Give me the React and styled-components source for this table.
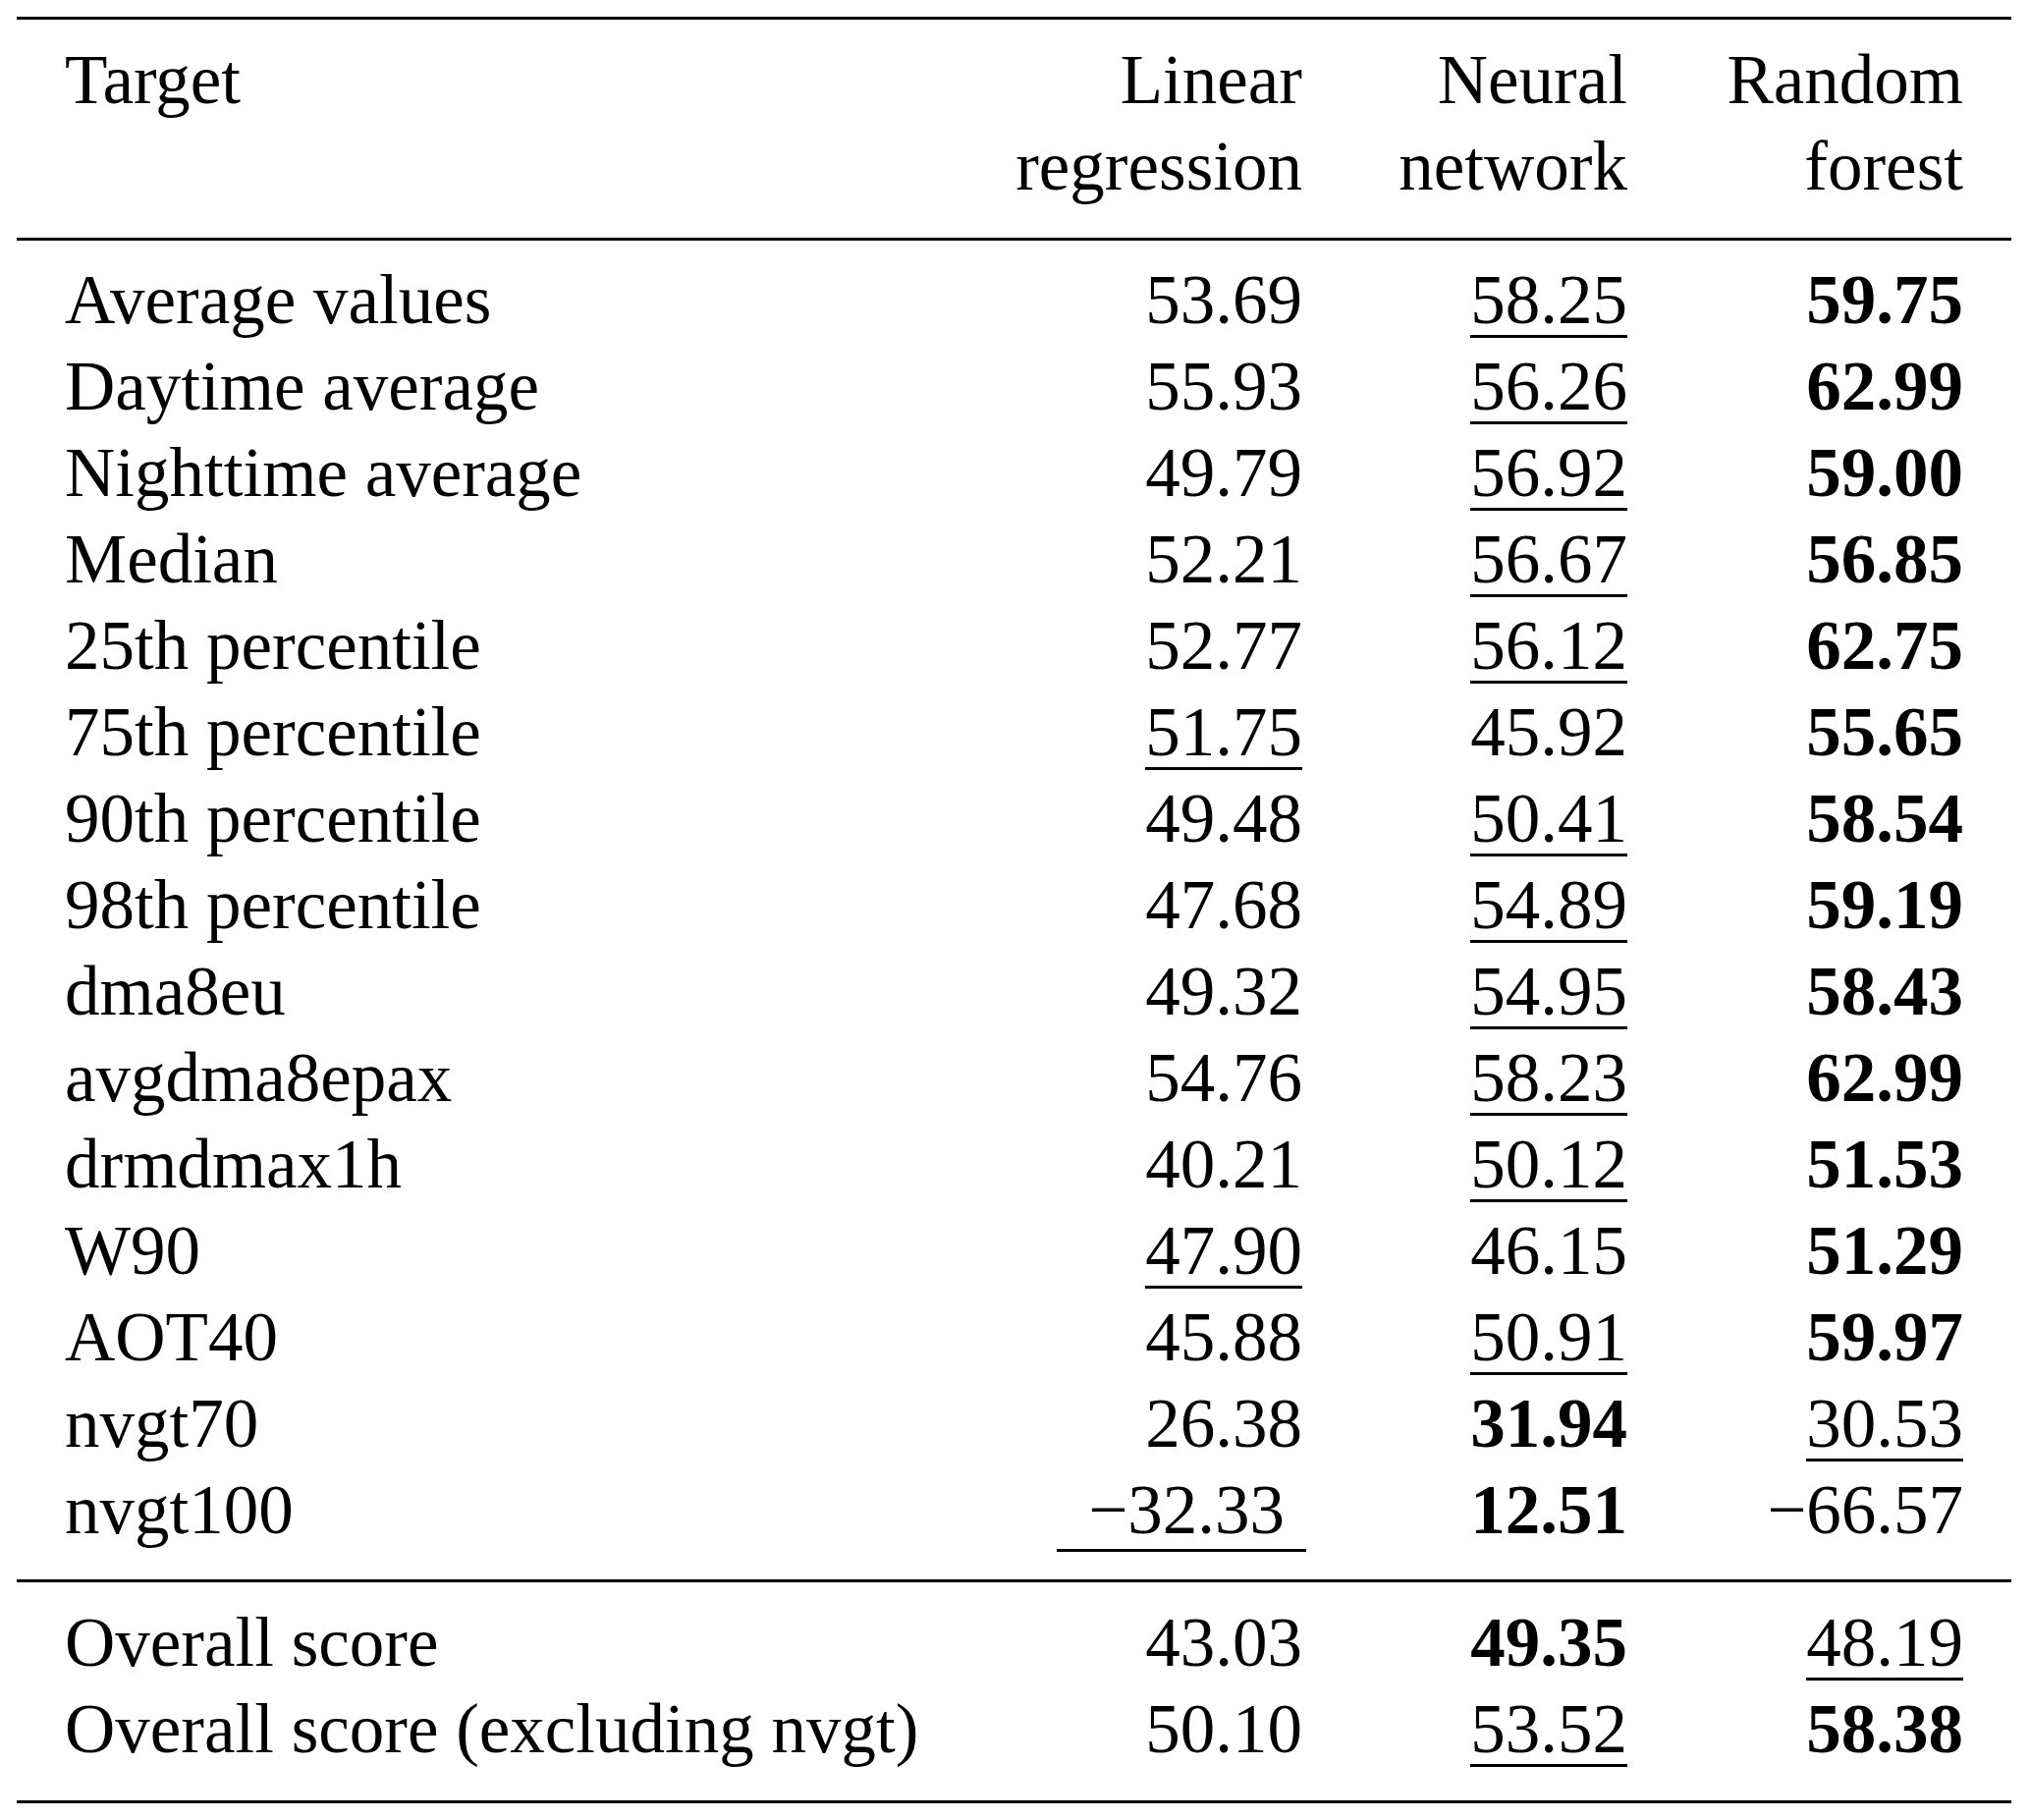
import styled, { createGlobalStyle } from "styled-components";

const GlobalStyle = createGlobalStyle`
  body {
    margin: 0;
    background: #ffffff;
    color: #000000;
    font-family: "Liberation Serif", "Times New Roman", serif;
  }
`;

// column template shared by every section so the columns line up
const COLUMNS = "870px 390px 331px 342px";

const Table = styled.div`
  width: 2031px;
  margin: 17px 0 0 17px;
  border-top: 3px solid #000;
  font-size: 71px;
  line-height: 88px;
`;

const Section = styled.div`
  display: grid;
  grid-template-columns: ${COLUMNS};
  padding: ${(p) => p.$pad};
  padding-left: 49px;
  padding-right: 49px;
  border-bottom: 3px solid #000;
`;

const Label = styled.div`
  text-align: left;
  white-space: nowrap;
`;

const Value = styled.div`
  text-align: right;
  white-space: nowrap;
  font-weight: ${(p) => (p.$bold ? 700 : 400)};
`;

const Marked = styled.span`
  display: inline-block;
  line-height: 71px;
  border-bottom: 3px solid #000;
  padding: ${(p) => p.$pad || "0"};
  margin-right: ${(p) => p.$shift || "0"};
`;

const headers = [
  ["Linear", "regression"],
  ["Neural", "network"],
  ["Random", "forest"],
];

// each value: [text, style] where style is "b" bold, "u" underline, "" plain
const rows = [
  ["Average values", ["53.69", ""], ["58.25", "u"], ["59.75", "b"]],
  ["Daytime average", ["55.93", ""], ["56.26", "u"], ["62.99", "b"]],
  ["Nighttime average", ["49.79", ""], ["56.92", "u"], ["59.00", "b"]],
  ["Median", ["52.21", ""], ["56.67", "u"], ["56.85", "b"]],
  ["25th percentile", ["52.77", ""], ["56.12", "u"], ["62.75", "b"]],
  ["75th percentile", ["51.75", "u"], ["45.92", ""], ["55.65", "b"]],
  ["90th percentile", ["49.48", ""], ["50.41", "u"], ["58.54", "b"]],
  ["98th percentile", ["47.68", ""], ["54.89", "u"], ["59.19", "b"]],
  ["dma8eu", ["49.32", ""], ["54.95", "u"], ["58.43", "b"]],
  ["avgdma8epax", ["54.76", ""], ["58.23", "u"], ["62.99", "b"]],
  ["drmdmax1h", ["40.21", ""], ["50.12", "u"], ["51.53", "b"]],
  ["W90", ["47.90", "u"], ["46.15", ""], ["51.29", "b"]],
  ["AOT40", ["45.88", ""], ["50.91", "u"], ["59.97", "b"]],
  ["nvgt70", ["26.38", ""], ["31.94", "b"], ["30.53", "u"]],
  ["nvgt100", ["\u221232.33", "m"], ["12.51", "b"], ["\u221266.57", ""]],
];

const totals = [
  ["Overall score", ["43.03", ""], ["49.35", "b"], ["48.19", "u"]],
  ["Overall score (excluding nvgt)", ["50.10", ""], ["53.52", "u"], ["58.38", "b"]],
];

const Cell = ({ value }) => {
  const [text, kind] = value;
  if (kind === "u") {
    return (
      <Value>
        <Marked>{text}</Marked>
      </Value>
    );
  }
  if (kind === "m") {
    // math-mode underline: wider and a bit lower
    return (
      <Value>
        <Marked $pad="0 22px 4px 32px" $shift="-4px">
          {text}
        </Marked>
      </Value>
    );
  }
  return <Value $bold={kind === "b"}>{text}</Value>;
};

const Rows = ({ data }) =>
  data.map(([label, ...values]) => [
    <Label key={label}>{label}</Label>,
    ...values.map((v, i) => <Cell key={label + i} value={v} />),
  ]);

export default function App() {
  return (
    <>
      <GlobalStyle />
      <Table>
        <Section $pad="17px 0 29px">
          <Label>Target</Label>
          {headers.map(([a, b]) => (
            <Value key={a}>
              {a}
              <br />
              {b}
            </Value>
          ))}
        </Section>
        <Section $pad="16px 0 27px">
          <Rows data={rows} />
        </Section>
        <Section $pad="17px 0 29px">
          <Rows data={totals} />
        </Section>
      </Table>
    </>
  );
}
